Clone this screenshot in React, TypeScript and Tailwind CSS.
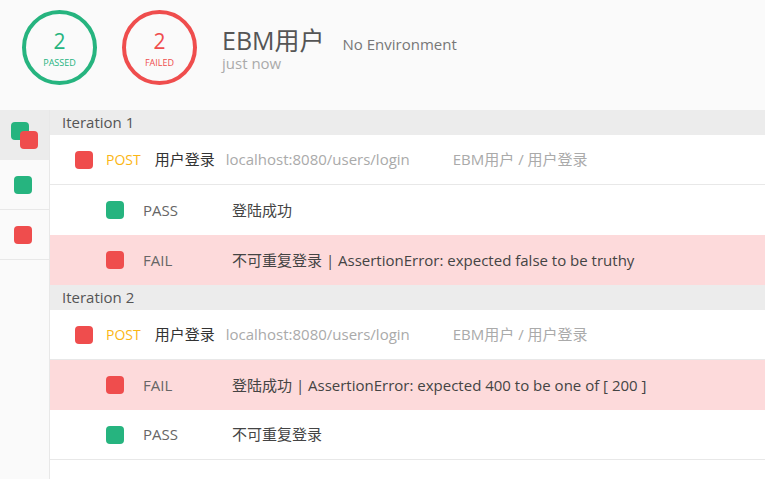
import React from "react";

const font = { fontFamily: '"Open Sans", "Noto Sans CJK SC", sans-serif' };

const Sq: React.FC<{ ok: boolean; className?: string }> = ({ ok, className = "" }) => (
  <div className={`w-[18px] h-[18px] rounded-[4px] shrink-0 ${ok ? "bg-[#26b47f]" : "bg-[#ef4d4d]"} ${className}`} />
);

const Circle: React.FC<{ ok: boolean; label: string }> = ({ ok, label }) => (
  <div
    className={`w-[75px] h-[75px] rounded-full border-4 flex flex-col items-center justify-center ${
      ok ? "border-[#26b47f] text-[#26b47f]" : "border-[#ef4d4d] text-[#ef4d4d]"
    }`}
  >
    <span className="text-[21px] leading-none mt-[2px]">2</span>
    <span className="text-[9px] leading-none mt-[6px]">{label}</span>
  </div>
);

type Assertion = { ok: boolean; text: string };

const Iteration: React.FC<{ n: number; asserts: Assertion[] }> = ({ n, asserts }) => (
  <div>
    <div className="h-[25px] bg-[#ececec] pl-[12px] flex items-center text-[15px] text-[#555]">Iteration {n}</div>
    <div className="h-[50px] bg-white border-b border-[#e8e8e8] flex items-center pl-[25px] text-[15px]">
      <Sq ok={false} />
      <span className="ml-[13px] text-[14px] text-[#fbb615]">POST</span>
      <span className="ml-[14px] text-[#333]">用户登录</span>
      <span className="ml-[11px] w-[227px] text-[#aaa]">localhost:8080/users/login</span>
      <span className="text-[#aaa]">EBM用户 / 用户登录</span>
    </div>
    {asserts.map((a, i) => (
      <div
        key={i}
        className={`h-[50px] flex items-center pl-[56px] text-[15px] ${
          a.ok ? "bg-white" : "bg-[#fddadb]"
        } ${i === asserts.length - 1 && a.ok ? "border-b border-[#e8e8e8]" : ""}`}
      >
        <Sq ok={a.ok} />
        <span className="ml-[19px] w-[89px] text-[#666]">{a.ok ? "PASS" : "FAIL"}</span>
        <span className="text-[#444]">{a.text}</span>
      </div>
    ))}
  </div>
);

export default function App() {
  return (
    <div className="w-[765px] h-[479px] overflow-hidden bg-white flex flex-col" style={font}>
      <div className="h-[110px] bg-[#fafafa] flex items-start pl-[22px] pt-[10px] shrink-0">
        <Circle ok label="PASSED" />
        <div className="ml-[25px]">
          <Circle ok={false} label="FAILED" />
        </div>
        <div className="ml-[25px] mt-[16px]">
          <div className="flex items-baseline">
            <span className="text-[25px] leading-[28px] text-[#555]">EBM用户</span>
            <span className="ml-[18px] text-[15px] leading-[20px] text-[#777]">No Environment</span>
          </div>
          <div className="text-[15px] text-[#aaa] leading-[18px]">just now</div>
        </div>
      </div>
      <div className="flex flex-1">
        <div className="w-[50px] bg-[#fafafa] border-r border-[#e8e8e8] shrink-0">
          <div className="h-[50px] bg-[#ececec] relative">
            <Sq ok className="absolute left-[11px] top-[12px]" />
            <Sq ok={false} className="absolute left-[20px] top-[21px]" />
          </div>
          <div className="h-[50px] border-b border-[#e8e8e8] flex items-center pl-[14px]">
            <Sq ok />
          </div>
          <div className="h-[50px] border-b border-[#e8e8e8] flex items-center pl-[14px]">
            <Sq ok={false} />
          </div>
        </div>
        <div className="flex-1 bg-white">
          <Iteration
            n={1}
            asserts={[
              { ok: true, text: "登陆成功" },
              { ok: false, text: "不可重复登录 | AssertionError: expected false to be truthy" },
            ]}
          />
          <Iteration
            n={2}
            asserts={[
              { ok: false, text: "登陆成功 | AssertionError: expected 400 to be one of [ 200 ]" },
              { ok: true, text: "不可重复登录" },
            ]}
          />
        </div>
      </div>
    </div>
  );
}
